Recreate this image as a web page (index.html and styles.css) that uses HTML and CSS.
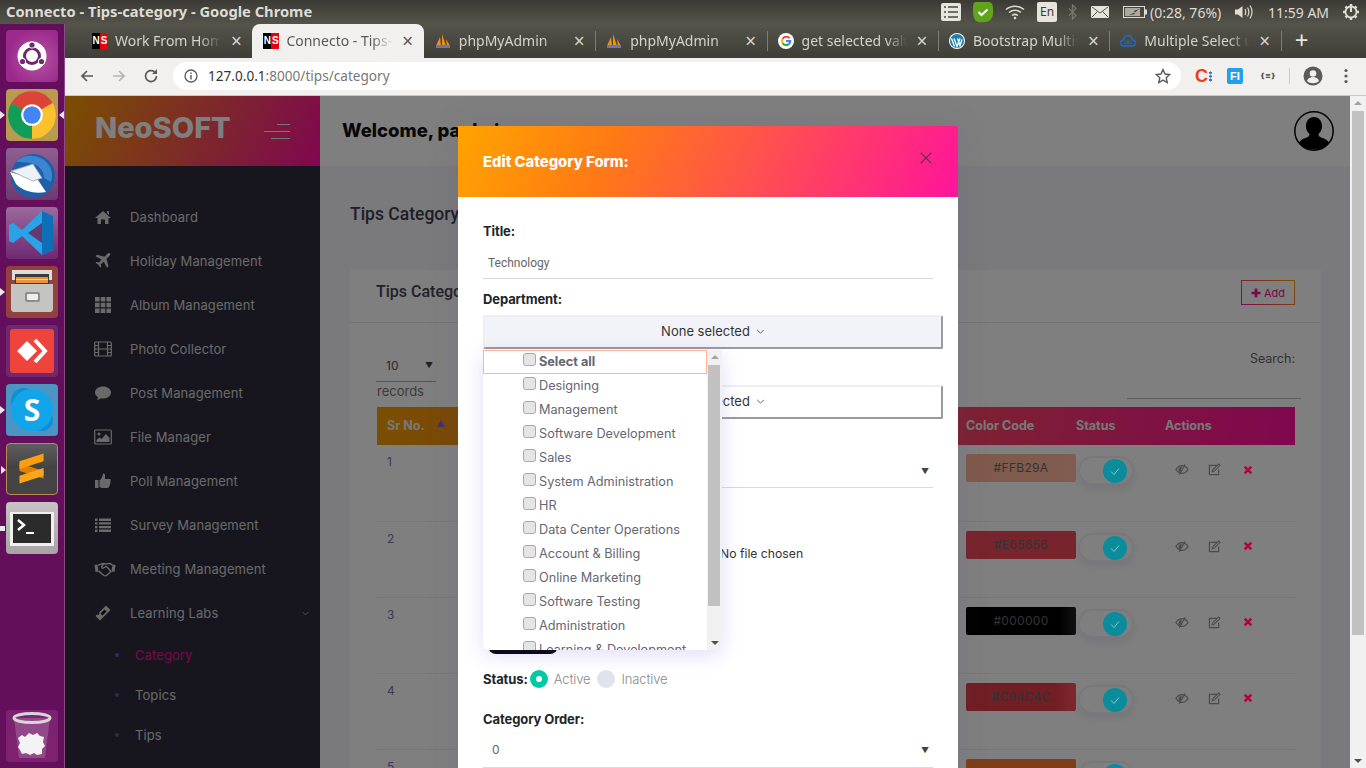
FILE: index.html
```html
<!DOCTYPE html>
<html>
<head>
    <title>Connecto - Tips-category</title>
    <meta name="viewport" content="width=device-width, initial-scale=1.0">
    <link rel="stylesheet" href="styles.css">
</head>
<body>
<svg class="defs" xmlns="http://www.w3.org/2000/svg">
    <symbol id="i-eye" viewBox="0 0 16 14"><path d="M1 7c2-3 4.500-4.500 7-4.500S13 4 15 7c-2 3-4.500 4.500-7 4.500S3 10 1 7z" fill="none" stroke="currentColor" stroke-width="1.400"/><path d="M4 8c0-3 1.500-4 4-4.500L6 11C5 10.500 4 9.500 4 8z" fill="currentColor"/><path d="M11.500 1L5 13" stroke="currentColor" stroke-width="1.400"/></symbol>
    <symbol id="i-edit" viewBox="0 0 14 14"><path d="M10 2.500H1.500v10h10V7" fill="none" stroke="currentColor" stroke-width="1.300"/><path d="M5 7.500L11.500 1 13 2.500 6.500 9l-2 .5z" fill="none" stroke="currentColor" stroke-width="1.100"/></symbol>
    <symbol id="i-x" viewBox="0 0 12 12"><path d="M2 2l8 8M10 2l-8 8" stroke="currentColor" stroke-width="3"/></symbol>
    <symbol id="i-check" viewBox="0 0 12 12"><path d="M2 6.500l3 3 5-6" fill="none" stroke="currentColor" stroke-width="0.800"/></symbol>
    <symbol id="i-chev" viewBox="0 0 10 6"><path d="M1 1l4 4 4-4" fill="none" stroke="currentColor" stroke-width="1"/></symbol>
</svg>

<div class="titlebar">
    <span class="win-title">Connecto - Tips-category - Google Chrome</span>
    <div class="tray">
        <svg class="t-list" viewBox="0 0 20 20"><rect x="0" y="1" width="20" height="18" rx="2" fill="#e6e4dc"/><path d="M3 5h2M7 5h10M3 10h2M7 10h10M3 15h2M7 15h10" stroke="#4a4a44" stroke-width="1.500"/></svg>
        <svg class="t-green" viewBox="0 0 22 22"><path d="M4 1h13c3 0 4 3 4 7 1 6-1 13-8 13-3 0-6 1-9-1-3-3-3-8-3-11 0-4 0-8 3-8z" fill="#5fa41c"/><path d="M6.500 11l3 3 6-5.500" fill="none" stroke="#fff" stroke-width="2"/></svg>
        <svg class="t-wifi" viewBox="0 0 20 16"><path d="M1 5.500c5-4.500 13-4.500 18 0M4 8.500c3.500-3 8.500-3 12 0M7 11.500c2-1.500 4-1.500 6 0" fill="none" stroke="#dedcd4" stroke-width="1.500"/><circle cx="10" cy="14" r="1.300" fill="#dedcd4"/></svg>
        <span class="t-lang">En</span>
        <svg class="t-bt" viewBox="0 0 10 16"><path d="M1 4.500l7 7-3.500 3.500V1L8 4.500l-7 7" fill="none" stroke="#77766e" stroke-width="1.300"/></svg>
        <svg class="t-mail" viewBox="0 0 18 12"><rect width="18" height="12" rx="1" fill="#e6e4dc"/><path d="M1 1l8 6 8-6M1 11l5.500-5.500M17 11l-5.500-5.500" fill="none" stroke="#55544b" stroke-width="1"/></svg>
        <svg class="t-batt" viewBox="0 0 24 12"><rect x="0.500" y="0.500" width="21" height="11" fill="none" stroke="#dedcd4"/><rect x="2" y="2" width="15" height="8" fill="#aaa89f"/><rect x="22" y="3.500" width="2" height="5" fill="#dedcd4"/><path d="M6 9l6-2.500-1-1.500 5-2-5 4 1 1z" fill="#2f2e2a"/></svg>
        <span class="t-text t-pct">(0:28, 76%)</span>
        <svg class="t-vol" viewBox="0 0 20 16"><path d="M1 5.500h3L8.500 2v12L4 10.500H1z" fill="#dedcd4"/><path d="M11 5c1 2 1 4 0 6M13.500 3.500c1.800 3 1.800 6 0 9M16 1.500c2.500 4 2.500 9 0 13" fill="none" stroke="#dedcd4" stroke-width="1.200"/></svg>
        <span class="t-text t-time">11:59 AM</span>
        <svg class="t-power" viewBox="0 0 18 18"><path d="M9 1v2M9 15v2M1 9h2M15 9h2M3.500 3.500L5 5M13 13l1.500 1.500M14.500 3.500L13 5M5 13l-1.500 1.500" stroke="#dedcd4" stroke-width="2.500"/><circle cx="9" cy="9" r="5.500" fill="none" stroke="#dedcd4" stroke-width="1.800"/><path d="M9 2v7" stroke="#dedcd4" stroke-width="2.200"/></svg>
    </div>
</div>

<div class="desktop">
    <!-- launcher -->
    <div class="launcher">
        <div class="tile tile-ubuntu">
            <svg viewBox="0 0 52 52"><circle cx="26" cy="26" r="14.500" fill="#fff"/><circle cx="26" cy="26" r="7.500" fill="none" stroke="#6d2a6b" stroke-width="3"/><circle cx="26" cy="15" r="3.500" fill="#fff"/><circle cx="26" cy="15" r="2.600" fill="#6d2a6b"/><circle cx="16.500" cy="31.500" r="3.500" fill="#fff"/><circle cx="16.500" cy="31.500" r="2.600" fill="#6d2a6b"/><circle cx="35.500" cy="31.500" r="3.500" fill="#fff"/><circle cx="35.500" cy="31.500" r="2.600" fill="#6d2a6b"/></svg>
        </div>
        <div class="tile tile-chrome pip pip-r">
            <svg viewBox="0 0 48 48"><path d="M4.950 13A22 22 0 0 1 43.050 13L24 24z" fill="#db4437"/><path d="M43.050 13A22 22 0 0 1 24 46L24 24z" fill="#fbc02d"/><path d="M24 46A22 22 0 0 1 4.950 13L24 24z" fill="#0f9d58"/><circle cx="24" cy="24" r="10" fill="#fff"/><circle cx="24" cy="24" r="8" fill="#4285f4"/></svg>
        </div>
        <div class="tile tile-bird">
            <svg viewBox="0 0 52 52"><circle cx="27" cy="28" r="22" fill="#1f5fa8"/><path d="M10 14c8-9 24-8 32 2 4 5 5 12 3 18l-7-4c0-8-6-14-14-15-5-1-10-1-14-1z" fill="#3a86d0"/><path d="M4 24l28 8 8 12c-10 2-22 0-30-8z" fill="#fff"/><path d="M5 23l22-7 9 14-9 3z" fill="#eef1f6" stroke="#8da6c4" stroke-width="0.800"/></svg>
        </div>
        <div class="tile tile-code">
            <svg viewBox="0 0 52 52"><path d="M36 4l11 5v34l-11 5-20-19-9 7-4-2V18l4-2 9 7z" fill="#2aa2e8"/><path d="M36 4l11 5v34l-11 5z" fill="#0e6fb8"/><path d="M36 16L22 26l14 10z" fill="#623a70"/></svg>
        </div>
        <div class="tile tile-files pip">
            <svg viewBox="0 0 52 52"><path d="M6 4h40v10H6z" fill="#dcdcd8"/><path d="M9 8h34v12H9z" fill="#3a3a38"/><path d="M10 11h32v6H10z" fill="#e8923e"/><path d="M10 13h32v1H10z" fill="#f6d9b0"/><path d="M5 18h42v26l-2 2H7l-2-2z" fill="#c4c4c0"/><rect x="19" y="26" width="15" height="10" rx="2" fill="#8d8d89"/><rect x="21" y="28" width="11" height="6" rx="1" fill="#eeeeea"/></svg>
        </div>
        <div class="tile tile-any">
            <svg viewBox="0 0 52 52"><rect x="4" y="4" width="44" height="44" rx="3" fill="#ef443b"/><path d="M11 26l10-10 10 10-10 10z" fill="#fff"/><path d="M29 15l10 11-10 11" fill="none" stroke="#fff" stroke-width="4"/></svg>
        </div>
        <div class="tile tile-skype pip">
            <svg viewBox="0 0 52 52"><circle cx="18" cy="17" r="13" fill="#0b8fd6"/><circle cx="36" cy="36" r="11" fill="#0b8fd6"/><circle cx="26" cy="26" r="21" fill="#12a5ea"/><text x="26" y="37" class="skype-s">S</text></svg>
        </div>
        <div class="tile tile-sublime pip">
            <svg viewBox="0 0 52 52"><path d="M13 20l25 8v8l-25-8z" fill="#e08200"/><path d="M13 18l25-8v8l-25 8z" fill="#ff9d0a"/><path d="M13 33l25-8v8l-25 8z" fill="#ffa51c"/></svg>
        </div>
        <div class="tile tile-term pip pip-wide">
            <svg viewBox="0 0 52 52"><rect x="4" y="10" width="44" height="34" fill="#f0f0ee"/><rect x="7" y="12" width="38" height="29" fill="#2b2b2b"/><path d="M12 18l6 5-6 5" fill="none" stroke="#fff" stroke-width="2.500"/><path d="M20 31h8" stroke="#fff" stroke-width="2"/></svg>
        </div>
        <div class="tile tile-trash">
            <svg viewBox="0 0 52 52"><path d="M8 8l5 40h26l5-40z" fill="#fff" fill-opacity="0.180"/><ellipse cx="26" cy="8" rx="18" ry="4.500" fill="none" stroke="#d7d7d7" stroke-width="3"/><path d="M12 28l4-3 3 2 4-4 4 2 4-2 3 3 4 1-1 5 2 4-3 3 0 5-5 1-3-2-4 2-4-2-4 1-2-4-2-3 2-4z" fill="#f3f3f3"/></svg>
        </div>
    </div>

    <div class="chrome">
        <div class="tabstrip">
            <div class="tab"><span class="fav-ns"><b>N</b><b>S</b></span><span class="tab-title">Work From Home</span><span class="tab-x">×</span></div>
            <div class="tab tab-active"><span class="fav-ns"><b>N</b><b>S</b></span><span class="tab-title">Connecto - Tips-category</span><span class="tab-x">×</span></div>
            <div class="tab">
                <svg class="fav" viewBox="0 0 16 16"><path d="M1 13L5 4l1 9zM7 13V1l4 12zM11 6l4 7h-3z" fill="#f29111"/><rect x="1" y="12" width="14" height="3" fill="#6c78af"/></svg>
                <span class="tab-title">phpMyAdmin</span><span class="tab-x">×</span></div>
            <div class="tab tab-sep">
                <svg class="fav" viewBox="0 0 16 16"><path d="M1 13L5 4l1 9zM7 13V1l4 12zM11 6l4 7h-3z" fill="#f29111"/><rect x="1" y="12" width="14" height="3" fill="#6c78af"/></svg>
                <span class="tab-title">phpMyAdmin</span><span class="tab-x">×</span></div>
            <div class="tab tab-sep">
                <svg class="fav" viewBox="0 0 16 16"><circle cx="8" cy="8" r="8" fill="#fff"/><path d="M12.500 5A5.300 5.300 0 0 0 3.700 5.200l1.700 1.400A3 3 0 0 1 10.600 5.800z" fill="#ea4335"/><path d="M3.700 5.200a5.300 5.300 0 0 0 0 5.600l1.700-1.400a3 3 0 0 1 0-2.800z" fill="#fbbc05"/><path d="M3.700 10.800a5.300 5.300 0 0 0 8.300.6l-1.700-1.300a3 3 0 0 1-4.900-.7z" fill="#34a853"/><path d="M13.300 7H8v2h3a3 3 0 0 1-.7 1.100l1.700 1.300C13 10.300 13.500 8.700 13.300 7z" fill="#4285f4"/></svg>
                <span class="tab-title">get selected value</span><span class="tab-x">×</span></div>
            <div class="tab tab-sep">
                <svg class="fav" viewBox="0 0 16 16"><circle cx="8" cy="8" r="8" fill="#fff"/><circle cx="8" cy="8" r="7" fill="#1d7fb0"/><path d="M2.500 5.500l3 8M5 5.500l3 8 3-8M8.500 5.500l2.500 7 2-6" fill="none" stroke="#fff" stroke-width="1.300"/></svg>
                <span class="tab-title">Bootstrap Multiselect</span><span class="tab-x">×</span></div>
            <div class="tab tab-sep">
                <svg class="fav" viewBox="0 0 16 16"><path d="M4 13a3 3 0 0 1-.5-6C4 4 6 2.500 8 2.500S12 4 12.500 7a3 3 0 0 1-.5 6z" fill="none" stroke="#1c6dd0" stroke-width="1.300"/><circle cx="6.300" cy="9.500" r="1.500" fill="none" stroke="#1c6dd0"/><circle cx="9.700" cy="9.500" r="1.500" fill="none" stroke="#1c6dd0"/></svg>
                <span class="tab-title">Multiple Select using</span><span class="tab-x">×</span></div>
            <div class="tab-new tab-sep">+</div>
        </div>

        <div class="toolbar">
            <svg class="tb-ico" viewBox="0 0 16 16"><path d="M14 8H3M8 3L3 8l5 5" fill="none" stroke="#5a5a5a" stroke-width="1.700"/></svg>
            <svg class="tb-ico tb-fwd" viewBox="0 0 16 16"><path d="M2 8h11M8 3l5 5-5 5" fill="none" stroke="#b4b4b4" stroke-width="1.700"/></svg>
            <svg class="tb-ico tb-rel" viewBox="0 0 16 16"><path d="M13.500 8A5.500 5.500 0 1 1 11.500 3.800" fill="none" stroke="#5a5a5a" stroke-width="1.700"/><path d="M14 1v5H9z" fill="#5a5a5a"/></svg>
            <div class="omnibox">
                <svg class="info" viewBox="0 0 14 14"><circle cx="7" cy="7" r="6" fill="none" stroke="#5a5a5a" stroke-width="1.300"/><path d="M7 6v4.500M7 3.500v1.500" stroke="#5a5a5a" stroke-width="1.400"/></svg>
                <span class="url"><b>127.0.0.1</b>:8000/tips/category</span>
                <svg class="star" viewBox="0 0 16 16"><path d="M8 1.500l2 4.500 4.800.5-3.600 3.200 1 4.800L8 12.100l-4.200 2.400 1-4.800L1.200 6.500 6 6z" fill="none" stroke="#5a5a5a" stroke-width="1.400"/></svg>
            </div>
            <div class="ext-c"><span>C</span><i></i></div>
            <div class="ext-f">FI</div>
            <div class="ext-j">{≡}</div>
            <div class="tb-sep"></div>
            <svg class="tb-user" viewBox="0 0 20 20"><circle cx="10" cy="10" r="9.500" fill="#5a5a5a"/><circle cx="10" cy="7.500" r="3.300" fill="#f1f0ee"/><path d="M4 15c1-3 3.500-4 6-4s5 1 6 4c-3 3-9 3-12 0z" fill="#f1f0ee"/></svg>
            <svg class="tb-menu" viewBox="0 0 4 16"><circle cx="2" cy="2.500" r="1.600" fill="#5a5a5a"/><circle cx="2" cy="8" r="1.600" fill="#5a5a5a"/><circle cx="2" cy="13.500" r="1.600" fill="#5a5a5a"/></svg>
        </div>

        <div class="viewport">
            <div class="page">
                <!-- sidebar -->
                <aside class="sidebar">
                    <div class="brand">
                        <span class="logo">NeoSOFT</span>
                        <span class="burger"><i></i><i></i><i></i></span>
                    </div>
                    <nav class="nav">
                        <a class="nav-item"><svg viewBox="0 0 18 18"><path d="M9 3l8 7h-2.500v6H11v-4.500H7V16H3.500v-6H1zM13 3h2v4l-2-2z" fill="currentColor"/></svg>Dashboard</a>
                        <a class="nav-item"><svg viewBox="0 0 18 18"><path d="M16.500 1.500c-1-1-2.500-.3-3.500.7L10.500 4.800 3 2.800 1.500 4.300l6 3.200L5 10.500l-2.500-.4-1 1 3 1.700 1.700 3 1-1-.4-2.500 3-2.500 3.200 6 1.500-1.500-2-7.500 2.600-2.500c1-1 1.700-2.500.8-3.300z" fill="currentColor"/></svg>Holiday Management</a>
                        <a class="nav-item"><svg viewBox="0 0 18 18"><path d="M1 1h4.600v4.600H1zM6.700 1h4.600v4.600H6.700zM12.400 1H17v4.600h-4.600zM1 6.700h4.600v4.600H1zM6.700 6.700h4.600v4.600H6.700zM12.400 6.700H17v4.600h-4.600zM1 12.400h4.600V17H1zM6.700 12.400h4.600V17H6.700zM12.400 12.400H17V17h-4.600z" fill="currentColor"/></svg>Album Management</a>
                        <a class="nav-item"><svg viewBox="0 0 18 18"><rect x="0.700" y="2" width="16.600" height="14" rx="1" fill="none" stroke="currentColor" stroke-width="1.200"/><path d="M4.500 2v14M13.500 2v14M.7 5.500h3.800M.7 9h3.800M.7 12.500h3.800M13.500 5.500h3.800M13.500 9h3.800M13.500 12.500h3.800M4.500 9h9" stroke="currentColor" stroke-width="1.200"/></svg>Photo Collector</a>
                        <a class="nav-item"><svg viewBox="0 0 18 18"><path d="M9 2.500c4.500 0 8 2.600 8 6s-3.500 6-8 6c-.8 0-1.500-.1-2.200-.2C5.500 15.500 4 16 2.700 16c.8-.8 1.300-1.800 1.300-2.800C2.200 12.100 1 10.400 1 8.500c0-3.400 3.500-6 8-6z" fill="currentColor"/></svg>Post Management</a>
                        <a class="nav-item"><svg viewBox="0 0 18 18"><rect x="0.700" y="2" width="16.600" height="14" rx="1" fill="none" stroke="currentColor" stroke-width="1.200"/><circle cx="5" cy="6" r="1.500" fill="currentColor"/><path d="M2.500 14v-2l3-2.500 2 1.500 4.500-5 3.500 4v4z" fill="currentColor"/></svg>File Manager</a>
                        <a class="nav-item"><svg viewBox="0 0 18 18"><path d="M1 8h3.500v8H1zM5.500 8.500c2-1.500 3-4 3.500-7 1.500-.5 2.500 1 2 3L11 7h4.500c1.500 0 1.500 2 .7 2.500.7.800.5 2-.3 2.400.4 1-.1 1.800-.8 2.100.2 1.200-.5 2-2 2H9c-1.500 0-2.500-.5-3.500-1z" fill="currentColor"/></svg>Poll Management</a>
                        <a class="nav-item"><svg viewBox="0 0 18 18"><path d="M1 2.500h2.500v2.400H1zM5 2.500h12v2.400H5zM1 6.200h2.500v2.400H1zM5 6.200h12v2.400H5zM1 9.900h2.500v2.400H1zM5 9.900h12v2.400H5zM1 13.600h2.500V16H1zM5 13.600h12V16H5z" fill="currentColor"/></svg>Survey Management</a>
                        <a class="nav-item nav-wide"><svg viewBox="0 0 22 18"><path d="M.5 5l3-.5 1 7-3 .5zM21.500 5l-3-.5-1 7 3 .5z" fill="currentColor"/><path d="M4 5c2 0 3-1.500 6-1.500 1 0 1.500.5 2 .5s2-.5 3-.5c2 0 3 1.500 3.500 1.500M4.500 11c1 .5 4 3.500 5.500 4.500 1 .6 2 .5 3-.5l3-2.500 1.500-1.500M10 3.500C8.500 5 7 7 8 8c1.500 1 3-1.500 4-1.500s4.500 4.500 5 5" fill="none" stroke="currentColor" stroke-width="1.400"/></svg>Meeting Management</a>
                        <a class="nav-item"><svg viewBox="0 0 18 18"><path d="M12 1.500l4.500 4.500L6 16.500 1.500 12 3 10.500c.8.500 1.500.5 2 0s.5-1.200 0-2z" fill="currentColor"/><path d="M6.500 9.500l4-4 2 2-4 4z" fill="#17161f"/></svg>Learning Labs<svg class="nav-chev" viewBox="0 0 10 6"><use href="#i-chev"/></svg></a>
                        <a class="nav-sub sub-active">Category</a>
                        <a class="nav-sub">Topics</a>
                        <a class="nav-sub">Tips</a>
                    </nav>
                </aside>

                <main class="main">
                    <header class="topbar">
                        <span class="welcome">Welcome, pankaj</span>
                        <svg class="avatar" viewBox="0 0 40 40"><circle cx="20" cy="20" r="19.200" fill="#fff" stroke="#000" stroke-width="1.500"/><path d="M20 6c5 0 8 4 8 9 0 3-1 6-3.500 8 0 2 1 3 4 4 3 1 5 2 6.500 5C31 37 26 38.500 20 38.500S9 37 5 32c1.500-3 3.500-4 6.500-5 3-1 4-2 4-4-2.500-2-3.500-5-3.500-8 0-5 3-9 8-9z" fill="#000"/></svg>
                    </header>
                    <div class="content">
                        <h2 class="page-title">Tips Category</h2>
                        <section class="card">
                            <div class="card-head">
                                <h3>Tips Category</h3>
                                <a class="btn-add"><svg viewBox="0 0 10 10"><path d="M5 .5v9M.5 5h9" stroke="currentColor" stroke-width="2.600"/></svg>Add</a>
                            </div>
                            <div class="filters">
                                <div class="len">
                                    <div class="len-select">10<span class="caret">▼</span></div>
                                    <div class="len-label">records</div>
                                </div>
                                <div class="search">
                                    <div>Search:</div>
                                    <div class="search-input"></div>
                                </div>
                            </div>
                            <table class="grid">
                                <colgroup><col class="c-sr"><col class="c-title"><col class="c-color"><col class="c-status"><col class="c-act"></colgroup>
                                <thead>
                                    <tr><th>Sr No.<span class="sort"></span></th><th>Title</th><th>Color Code</th><th class="th-flush">Status</th><th class="th-flush">Actions</th></tr>
                                </thead>
                                <tbody>
                                    <tr>
                                        <td>1</td><td>Technology</td>
                                        <td><div class="chip chip-1">#FFB29A</div></td>
                                        <td class="td-flush"><span class="toggle"><span class="knob"><svg viewBox="0 0 12 12"><use href="#i-check"/></svg></span></span></td>
                                        <td class="td-flush"><div class="acts"><svg class="a-eye"><use href="#i-eye"/></svg><svg class="a-edit"><use href="#i-edit"/></svg><svg class="a-x"><use href="#i-x"/></svg></div></td>
                                    </tr>
                                    <tr>
                                        <td>2</td><td>Management</td>
                                        <td><div class="chip chip-2">#E65656</div></td>
                                        <td class="td-flush"><span class="toggle"><span class="knob"><svg viewBox="0 0 12 12"><use href="#i-check"/></svg></span></span></td>
                                        <td class="td-flush"><div class="acts"><svg class="a-eye"><use href="#i-eye"/></svg><svg class="a-edit"><use href="#i-edit"/></svg><svg class="a-x"><use href="#i-x"/></svg></div></td>
                                    </tr>
                                    <tr>
                                        <td>3</td><td>Design</td>
                                        <td><div class="chip chip-3">#000000</div></td>
                                        <td class="td-flush"><span class="toggle"><span class="knob"><svg viewBox="0 0 12 12"><use href="#i-check"/></svg></span></span></td>
                                        <td class="td-flush"><div class="acts"><svg class="a-eye"><use href="#i-eye"/></svg><svg class="a-edit"><use href="#i-edit"/></svg><svg class="a-x"><use href="#i-x"/></svg></div></td>
                                    </tr>
                                    <tr>
                                        <td>4</td><td>Sales</td>
                                        <td><div class="chip chip-4">#C94C4C</div></td>
                                        <td class="td-flush"><span class="toggle"><span class="knob"><svg viewBox="0 0 12 12"><use href="#i-check"/></svg></span></span></td>
                                        <td class="td-flush"><div class="acts"><svg class="a-eye"><use href="#i-eye"/></svg><svg class="a-edit"><use href="#i-edit"/></svg><svg class="a-x"><use href="#i-x"/></svg></div></td>
                                    </tr>
                                    <tr>
                                        <td>5</td><td>Marketing</td>
                                        <td><div class="chip chip-5">#FF7D4F</div></td>
                                        <td class="td-flush"><span class="toggle"><span class="knob"><svg viewBox="0 0 12 12"><use href="#i-check"/></svg></span></span></td>
                                        <td class="td-flush"></td>
                                    </tr>
                                </tbody>
                            </table>
                        </section>
                    </div>
                </main>

                <div class="backdrop"></div>

                <!-- The Modal -->
                <div class="modal">
                    <div class="modal-head">
                        <h4>Edit Category Form:</h4>
                        <svg class="modal-close" viewBox="0 0 10 10"><path d="M.5.5l9 9M9.500.5l-9 9" stroke="#6a2a55" stroke-width="1.100"/></svg>
                    </div>
                    <div class="modal-body">
                        <label class="lbl">Title:</label>
                        <div class="line-input input-title">Technology</div>
                        <label class="lbl lbl-dept">Department:</label>
                        <div class="ms-btn ms-grey">None selected<svg viewBox="0 0 10 6"><use href="#i-chev"/></svg></div>
                        <label class="lbl lbl-desig">Designation:</label>
                        <div class="ms-btn">None selected<svg viewBox="0 0 10 6"><use href="#i-chev"/></svg></div>
                        <label class="lbl lbl-type">Type:</label>
                        <div class="line-input input-sel"><span class="caret">▼</span></div>
                        <label class="lbl lbl-icon">Image:</label>
                        <div class="file-row">No file chosen</div>
                        <label class="lbl lbl-color">Color Code:</label>
                        <div class="color-swatch"></div>
                        <div class="status-row">
                            <label class="lbl">Status:</label>
                            <span class="radio radio-on"></span><span class="radio-text">Active</span>
                            <span class="radio"></span><span class="radio-text">Inactive</span>
                        </div>
                        <label class="lbl lbl-order">Category Order:</label>
                        <div class="line-input input-order">0<span class="caret">▼</span></div>
                    </div>
                </div>

                <!-- dropdown of the Department select -->
                <div class="ms-menu">
                    <ul class="ms-list">
                        <li class="ms-all"><input type="checkbox">Select all</li>
                        <li><input type="checkbox">Designing</li>
                        <li><input type="checkbox">Management</li>
                        <li><input type="checkbox">Software Development</li>
                        <li><input type="checkbox">Sales</li>
                        <li><input type="checkbox">System Administration</li>
                        <li><input type="checkbox">HR</li>
                        <li><input type="checkbox">Data Center Operations</li>
                        <li><input type="checkbox">Account &amp; Billing</li>
                        <li><input type="checkbox">Online Marketing</li>
                        <li><input type="checkbox">Software Testing</li>
                        <li><input type="checkbox">Administration</li>
                        <li><input type="checkbox">Learning &amp; Development</li>
                    </ul>
                    <div class="ms-scroll">
                        <span class="arr-up"></span>
                        <div class="ms-thumb"></div>
                        <span class="arr-down"></span>
                    </div>
                </div>
            </div>

            <div class="scrollbar">
                <span class="arr-up"></span>
                <div class="sb-thumb"></div>
                <span class="arr-down"></span>
            </div>
        </div>
    </div>
</div>
</body>
</html>
```

FILE: styles.css
```css
* { box-sizing: border-box; }
html, body { margin: 0; height: 100%; }
body {
    width: 1366px;
    height: 768px;
    overflow: hidden;
    display: flex;
    flex-direction: column;
    font-family: Inter, "Noto Sans", sans-serif;
    font-size: 13px;
}
.defs { display: none; }
svg { display: block; flex: none; }

/* top panel */
.titlebar {
    height: 24px;
    flex: none;
    display: flex;
    align-items: center;
    justify-content: space-between;
    background: linear-gradient(#3b3a35, #55544b);
    color: #dedcd4;
}
.win-title {
    margin: -2px 0 0 6px;
    font-family: "Noto Sans", sans-serif;
    font-weight: 700;
    font-size: 14.700px;
}
.tray { display: flex; align-items: center; height: 24px; }
.t-list { width: 20px; height: 20px; }
.t-green { width: 22px; height: 22px; margin-left: 11px; }
.t-wifi { width: 20px; height: 16px; margin-left: 11px; }
.t-lang {
    width: 20px;
    height: 20px;
    margin-left: 12px;
    background: #e6e4dc;
    color: #3b3a35;
    border-radius: 2px;
    font: 12px/20px "Noto Sans", sans-serif;
    text-align: center;
}
.t-bt { width: 10px; height: 16px; margin-left: 11px; }
.t-mail { width: 18px; height: 12px; margin-left: 13px; }
.t-batt { width: 24px; height: 12px; margin-left: 14px; }
.t-text { font: 14px "Noto Sans", sans-serif; color: #dedcd4; white-space: nowrap; }
.t-pct { margin-left: 3px; width: 75px; }
.t-vol { width: 20px; height: 16px; margin-left: 9px; }
.t-time { margin-left: 14px; width: 62px; }
.t-power { width: 18px; height: 18px; margin-left: 12px; margin-right: 6px; }

.desktop { flex: 1; display: flex; min-height: 0; }

/* launcher */
.launcher {
    width: 65px;
    flex: none;
    display: flex;
    flex-direction: column;
    gap: 7px;
    padding: 6px 0 6px 6px;
    background: #640f5c;
    border-right: 1px solid #8d4b87;
}
.tile {
    width: 52px;
    height: 52px;
    border-radius: 4px;
    position: relative;
    flex: none;
}
.tile-ubuntu { background: radial-gradient(circle at 60% 55%, #b14fa0 10%, #9c2a8c 70%); }
.tile-chrome { background: #b89a50; }
.tile-bird { background: linear-gradient(#8e6090, #6e3a70); }
.tile-code { background: linear-gradient(#9a6a9c, #6e2a72); }
.tile-files { background: #94403f; }
.tile-any { background: #6f2a6e; }
.tile-skype { background: #4b95c4; }
.tile-sublime { background: linear-gradient(#5e5e5e, #444 45%); border: 1px solid #b98a52; }
.tile-term { background: linear-gradient(#c8c4c6, #a8a4a6); }
.tile-trash { background: #7c2270; margin-top: auto; }
.skype-s { fill: #fff; font: 700 30px "Open Sans", sans-serif; text-anchor: middle; }
.pip::before {
    content: "";
    position: absolute;
    left: -6px;
    top: 22px;
    border-left: 5px solid #e8e8e8;
    border-top: 4px solid transparent;
    border-bottom: 4px solid transparent;
}
.pip-r::after {
    content: "";
    position: absolute;
    right: -6px;
    top: 22px;
    border-right: 5px solid #e8e8e8;
    border-top: 4px solid transparent;
    border-bottom: 4px solid transparent;
}
.pip-wide::before {
    top: 24px;
    width: 5px;
    height: 5px;
    border: 0;
    background: #e8e8e8;
}

/* chrome */
.chrome { flex: 1; display: flex; flex-direction: column; min-width: 0; }
.tabstrip {
    height: 34px;
    flex: none;
    display: flex;
    padding-left: 16px;
    background: linear-gradient(#55544b, #3e3d37);
    font-family: "Noto Sans", sans-serif;
    font-size: 14px;
    color: #d5d3cb;
}
.tab {
    width: 171.400px;
    flex: none;
    display: flex;
    align-items: center;
    padding: 0 8px 0 11px;
}
.tab-sep { position: relative; }
.tab-sep::before {
    content: "";
    position: absolute;
    left: 0;
    top: 7px;
    bottom: 7px;
    width: 1px;
    background: #7d7c72;
}
.tab-active {
    background: #f1f0ee;
    color: #58585a;
    border-radius: 8px 8px 0 0;
}
.fav-ns {
    width: 16px;
    height: 16px;
    flex: none;
    display: flex;
    font: 700 10px/16px "Liberation Sans", sans-serif;
    color: #fff;
    text-align: center;
}
.fav-ns b { width: 8px; background: #000; }
.fav-ns b + b { background: #e8000f; }
.fav { width: 16px; height: 16px; }
.tab-title {
    flex: 1;
    margin: -2px 0 0 7px;
    white-space: nowrap;
    overflow: hidden;
    -webkit-mask-image: linear-gradient(to right, #000 80%, transparent);
    mask-image: linear-gradient(to right, #000 80%, transparent);
}
.fav + .tab-title { margin-left: 8px; }
.tab-x { width: 12px; font-size: 19px; line-height: 34px; text-align: center; margin-left: 9px; margin-right: 2px; }
.tab-new {
    width: 44px;
    flex: none;
    padding-left: 14px;
    font-size: 24px;
    line-height: 31px;
    color: #e8e6de;
}

.toolbar {
    height: 38px;
    flex: none;
    display: flex;
    align-items: center;
    padding: 0 0 1px 14px;
    background: #f1f0ee;
    border-bottom: 1px solid #c9c9c9;
}
.tb-ico { width: 16px; height: 16px; }
.tb-fwd { margin-left: 16px; }
.tb-rel { margin-left: 16px; }
.omnibox {
    width: 1008px;
    height: 28px;
    margin-left: 14px;
    display: flex;
    align-items: center;
    padding: 0 10px 0 11px;
    background: #fff;
    border-radius: 14px;
}
.info { width: 14px; height: 14px; }
.url {
    flex: 1;
    margin: -2px 0 0 10px;
    font: 13.600px "Noto Sans", sans-serif;
    color: #777;
}
.url b { font-weight: 400; color: #333; }
.star { width: 16px; height: 16px; }
.ext-c {
    width: 18px;
    margin-left: 14px;
    display: flex;
    align-items: center;
    font: 700 18px "Liberation Sans", sans-serif;
    color: #f23a12;
}
.ext-c i { width: 3px; height: 11px; margin-left: 1px; background: radial-gradient(circle, #3a6fc0 55%, transparent 60%) 0 0 / 3px 3.600px; }
.ext-f {
    width: 16px;
    height: 16px;
    margin-left: 14px;
    background: #22a0ea;
    border-radius: 2px;
    color: #fff;
    font: 700 11px/16px "Liberation Sans", sans-serif;
    text-align: center;
}
.ext-j { width: 15px; margin-left: 17px; font: 700 7px "DejaVu Sans", sans-serif; color: #333; white-space: nowrap; }
.tb-sep { width: 1px; height: 16px; margin-left: 14px; background: #ccc; }
.tb-user { width: 20px; height: 20px; margin-left: 13px; }
.tb-menu { width: 4px; height: 16px; margin-left: 21px; }

.viewport { flex: 1; display: flex; min-height: 0; }
.page { flex: 1; min-width: 0; display: flex; position: relative; overflow: hidden; }
.backdrop {
    position: absolute;
    inset: 0;
    z-index: 2;
    background: rgba(0, 0, 0, 0.5);
}

/* sidebar */
.sidebar {
    width: 255px;
    flex: none;
    background: #2f2d3f;
    color: #d4d4d4;
}
.brand {
    height: 70px;
    display: flex;
    align-items: center;
    padding-left: 30px;
    background: linear-gradient(115deg, #f59e00, #ff0f9f);
}
.logo { font-size: 29px; font-weight: 800; color: #fff; margin-top: -8px; width: 169px; }
.burger { display: flex; flex-direction: column; align-items: flex-end; gap: 6px; width: 26px; }
.burger i { height: 1px; background: #eee; width: 26px; }
.burger i:first-child { width: 13px; }
.burger i:last-child { width: 19px; }
.nav { padding-top: 29px; }
.nav-item {
    height: 44px;
    display: flex;
    align-items: center;
    padding-left: 29px;
    letter-spacing: 0.100px;
}
.nav-item svg:first-child { width: 18px; height: 18px; margin-right: 18px; color: #d4d4d4; }
.nav-item.nav-wide svg:first-child { width: 22px; margin-right: 14px; }
.nav-chev { width: 7px; height: 5px; margin-left: auto; margin-right: 11px; }
.nav-sub {
    height: 40px;
    display: flex;
    align-items: center;
    padding-left: 50px;
    position: relative;
    letter-spacing: 0.100px;
}
.nav-sub::before {
    content: "";
    width: 4px;
    height: 4px;
    margin-right: 16px;
    border-radius: 50%;
    background: #5c5a78;
}
.sub-active { color: #f0118f; }
.sub-active::before { background: #7a4bd0; }

/* main */
.main { flex: 1; min-width: 0; display: flex; flex-direction: column; }
.topbar {
    height: 70px;
    flex: none;
    display: flex;
    align-items: center;
    justify-content: space-between;
    padding: 0 16px 0 22px;
    background: #fff;
}
.welcome { font-size: 18.500px; font-weight: 800; color: #111; margin-top: -2px; }
.avatar { width: 40px; height: 40px; margin-top: -1px; }
.content { flex: 1; padding: 0 29px 0 30px; background: #f4f4f9; }
.page-title {
    margin: 0;
    height: 104px;
    padding-top: 37px;
    font: 500 17.500px/22px Roboto, sans-serif;
    color: #3c3c50;
}
.card { background: #fff; padding: 0 26px; }
.card-head {
    height: 53px;
    margin: 0 -26px;
    padding: 10px 26px 0;
    display: flex;
    justify-content: space-between;
    border-bottom: 1px solid #e8e8e8;
}
.card-head h3 { margin: 1px 0 0; font: 500 16px/22px Roboto, sans-serif; color: #444456; }
.btn-add {
    width: 54px;
    height: 25px;
    display: flex;
    align-items: center;
    justify-content: center;
    gap: 3px;
    border: 1px solid;
    border-image: linear-gradient(45deg, #ff1493, #ffa000) 1;
    font-size: 11px;
    color: #f0108c;
}
.btn-add svg { width: 10px; height: 10px; }
.filters { height: 84px; display: flex; justify-content: space-between; }
.len { padding-top: 29px; width: 60px; }
.len-select {
    height: 30px;
    padding: 6px 0 0 10px;
    position: relative;
    border-bottom: 1px solid #aaa;
    font-size: 12px;
    color: #555;
}
.caret { position: absolute; font-size: 8px; line-height: 1; color: #444; }
.len-select .caret { right: 3px; top: 9px; }
.len-label { line-height: 19px; margin-left: 1px; color: #777; }
.search { width: 174px; margin-right: -6px; padding-top: 26px; text-align: right; padding-right: 6px; color: #666; }
.search > div:first-child { line-height: 20px; font-size: 12.500px; }
.search-input { height: 30px; margin-right: -6px; border-bottom: 1px solid #bbb; }

/* table */
.grid {
    width: 918px;
    margin-left: 1px;
    border-collapse: collapse;
    table-layout: fixed;
}
.c-sr { width: 120px; }
.c-title { width: 459px; }
.c-color { width: 120px; }
.c-status { width: 89px; }
.c-act { width: 130px; }
.grid thead tr { background: linear-gradient(100deg, #f59e00, #ff0f9f 100%); }
.grid th {
    height: 38px;
    padding: 0 0 2px 10px;
    text-align: left;
    font-size: 12.500px;
    font-weight: 700;
    color: #f1f1f1;
    position: relative;
    white-space: nowrap;
}
.grid th.th-flush { padding-left: 0; }
.sort {
    position: absolute;
    left: 60px;
    top: 13px;
    border-left: 4px solid transparent;
    border-right: 4px solid transparent;
    border-bottom: 7px solid #7a62f0;
}
.grid td {
    height: 76px;
    padding: 9px 0 0 10px;
    vertical-align: top;
    border-bottom: 1px solid #efefef;
    color: #7c6fb0;
    font-size: 12px;
    line-height: 15px;
}
.grid td.td-flush { padding-left: 0; }
.chip {
    width: 110px;
    height: 28px;
    border-radius: 2px;
    text-align: center;
    font-size: 12px;
    line-height: 27px;
    color: #66666c;
    letter-spacing: 0.300px;
}
.chip-1 { background: linear-gradient(90deg, #ffb498, #ffbaa0); }
.chip-2 { background: #f04858; }
.chip-3 { background: linear-gradient(90deg, #000 85%, #222); }
.chip-4 { background: linear-gradient(90deg, #e23c48 80%, #ff5060); }
.chip-5 { background: #ff7d33; }
.toggle {
    display: block;
    width: 56px;
    height: 29px;
    margin: 2px 0 0 2px;
    padding: 2px 0 0 23px;
    border: 2px solid #f0f0f8;
    border-radius: 15px;
    box-shadow: 0 4px 8px rgba(80, 70, 160, 0.12);
}
.knob {
    display: flex;
    align-items: center;
    justify-content: center;
    width: 24px;
    height: 24px;
    margin-top: -1px;
    border-radius: 50%;
    background: #0a8c9c;
    position: relative;
    z-index: 3;
    color: #9bd6da;
}
.knob svg { width: 12px; height: 12px; }
.acts { display: flex; align-items: center; padding: 9px 0 0 10px; color: #98989e; }
.a-eye { width: 14px; height: 13px; }
.a-edit { width: 13px; height: 13px; margin-left: 19px; }
.a-x { width: 10px; height: 10px; margin-left: 22px; color: #b5003c; position: relative; z-index: 3; }

/* modal */
.modal {
    position: absolute;
    left: 393px;
    top: 30px;
    z-index: 4;
    width: 500px;
    height: 700px;
    background: #fff;
    box-shadow: 0 0 30px rgba(80, 70, 120, 0.15);
}
.modal-head {
    height: 71px;
    display: flex;
    align-items: center;
    justify-content: space-between;
    padding: 0 26px 0 25px;
    background: linear-gradient(115deg, #ffa400, #ff7a14 30%, #ff5050 60%, #ff149b);
}
.modal-head h4 { margin: 0; font-size: 14.800px; font-weight: 800; color: #fff; }
.modal-close { width: 12px; height: 12px; margin-bottom: 7px; }
.modal-body { padding: 24px 25px; color: #666; }
.lbl { display: block; font-size: 13px; line-height: 20px; font-weight: 700; color: #212529; letter-spacing: -0.100px; }
.line-input {
    width: 450px;
    height: 38px;
    position: relative;
    border-bottom: 1px solid #d9d9d9;
    padding: 15px 0 0 5px;
    font-size: 12px;
    color: #666;
}
.input-title { font-family: Roboto, sans-serif; }
.lbl-dept { margin-top: 10px; }
.ms-btn {
    width: 460px;
    height: 34px;
    margin-top: 6px;
    padding-bottom: 2px;
    display: flex;
    align-items: center;
    justify-content: center;
    gap: 6px;
    background: #fff;
    border: 2px solid #eeeef4;
    border-right-color: #9a9aa0;
    border-bottom-color: #9a9aa0;
    border-radius: 2px;
    font-size: 13px;
    color: #333;
}
.ms-btn svg { width: 9px; height: 5px; color: #444; }
.ms-grey { background: #f2f3f8; }
.lbl-desig { margin-top: 10px; }
.lbl-type { margin-top: 11px; }
.line-input .caret { right: 4px; top: 17px; }
.lbl-icon { margin-top: 12px; }
.file-row { height: 37px; padding: 26px 0 0 237px; line-height: 16px; color: #333; font-size: 12.200px; white-space: nowrap; }
.lbl-color { margin-top: 53px; }
.color-swatch { width: 70px; height: 14px; margin: 10px 0 0 5px; background: #000; border-radius: 0 0 8px 8px; }
.status-row { display: flex; align-items: center; margin-top: 15px; height: 20px; }
.radio { width: 18px; height: 18px; margin-left: 7px; border-radius: 50%; background: #e1e3ec; }
.radio + .radio-text { margin-left: 6px; font-size: 13px; color: #888; font-weight: 300; letter-spacing: -0.100px; }
.radio-on { margin-left: 2px; background: #00c9a7; position: relative; }
.radio-on::after {
    content: "";
    position: absolute;
    left: 6px;
    top: 6px;
    width: 6px;
    height: 6px;
    border-radius: 50%;
    background: #fff;
}
.lbl-order { margin-top: 20px; }
.input-order { padding: 13px 0 0 9px; height: 39px; }

/* multiselect dropdown */
.ms-menu {
    position: absolute;
    left: 418px;
    top: 254px;
    z-index: 5;
    width: 239px;
    height: 300px;
    display: flex;
    background: #fff;
    border-radius: 0 0 6px 6px;
    box-shadow: 0 5px 20px rgba(110, 90, 220, 0.2);
    overflow: hidden;
}
.ms-list { flex: 1; min-width: 0; margin: 0; padding: 0; list-style: none; overflow: hidden; }
.ms-list li {
    height: 24px;
    padding: 0 0 2px 40px;
    display: flex;
    align-items: center;
    color: #666672;
    font-size: 12.700px;
    white-space: nowrap;
}
.ms-list input {
    appearance: none;
    width: 13px;
    height: 13px;
    margin: -3px 3px 0 0;
    flex: none;
    background: #e5e5e5;
    border: 1px solid #a8a8a8;
    border-radius: 3px;
}
.ms-all { border: 1px solid #ffb49a; font-weight: 700; padding-left: 39px !important; }
.ms-scroll { width: 15px; flex: none; position: relative; background: #f1f1f1; }
.ms-thumb { position: absolute; left: 1px; right: 2px; top: 15px; height: 241px; background: #c1c1c1; }
.arr-up, .arr-down {
    position: absolute;
    left: 50%;
    margin-left: -4px;
    border-left: 4px solid transparent;
    border-right: 4px solid transparent;
}
.arr-up { top: 5px; border-bottom: 4px solid #a3a3a3; }
.arr-down { bottom: 5px; border-top: 4px solid #505050; }

/* page scrollbar */
.scrollbar { width: 16px; flex: none; position: relative; background: #f1f1f1; }
.sb-thumb { position: absolute; left: 2px; right: 2px; top: 15px; height: 524px; background: #c1c1c1; }
```
